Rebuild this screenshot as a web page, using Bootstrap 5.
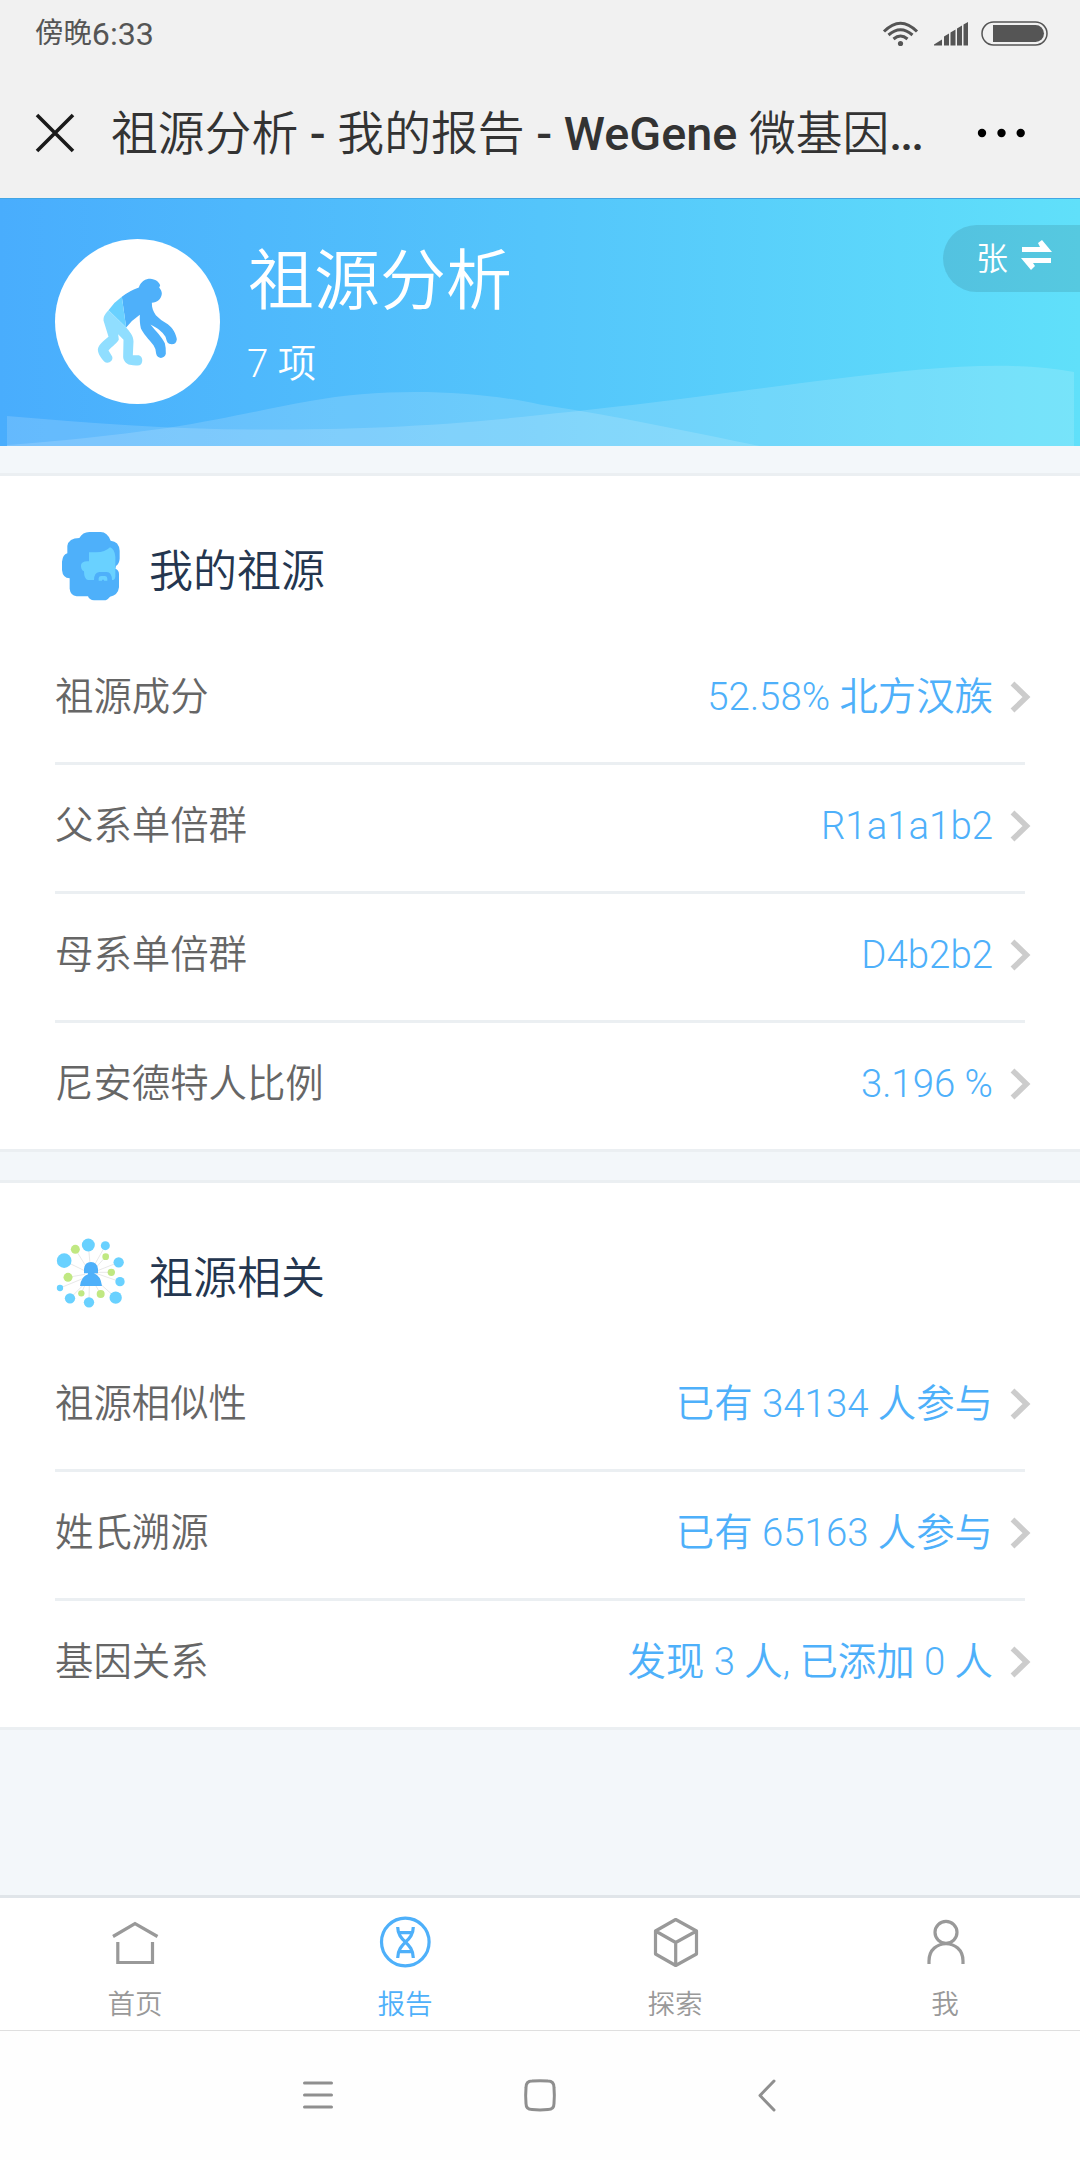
<!DOCTYPE html>
<html lang="zh-CN">
<head>
<meta charset="utf-8">
<meta name="viewport" content="width=device-width, initial-scale=1">
<title>祖源分析 - 我的报告 - WeGene 微基因</title>
<link href="https://cdn.jsdelivr.net/npm/bootstrap@5.3.0/dist/css/bootstrap.min.css" rel="stylesheet">
<style>
  body { font-family: Roboto, "Noto Sans CJK SC", sans-serif; font-weight: 350; background: #f3f7fa; line-height: 1.2; }
  .screen { width: 1080px; height: 2160px; background: #f3f7fa; }
  .chrome { background: #f1f1f1; height: 198px; color: #333; }
  .statusbar { height: 66px; padding: 2px 32px 0 35px; color: #555; }
  .statusbar svg { margin-top: -2px; }
  .clock-zh { font-size: 28.4px; font-weight: 400; }
  .clock-num { font-size: 32.2px; font-weight: 400; }
  .titlebar { height: 132px; padding: 2px 52px 0 35px; }
  .page-title { font-size: 46.8px; margin: 2px 0 0 36px; }
  .page-title b { font-weight: 500; }
  .page-title .dots { letter-spacing: -2px; }
  .hero { height: 248px; background: linear-gradient(90deg, #49adfd, #54c5fb 50%, #60e0fa); border-top: 1px solid #43a6e4; color: #fff; padding-left: 55px; }
  .hero-waves { left: 0; top: -1px; }
  .avatar { width: 165px; height: 165px; background: #fff; margin-top: 40px; }
  .hero-title { font-size: 66px; line-height: 80px; margin: 43px 0 0 28px; font-weight: 350; }
  .hero-count { font-size: 38.4px; line-height: 46px; margin: 19px 0 0 27px; }
  .switcher { height: 67px; width: 137px; top: 26px; right: 0; background: rgba(0,0,0,.1); border-radius: 34px 0 0 34px; font-size: 32px; padding: 1px 27px 0 33px; }
  .switcher svg { margin-top: -8px; }
  .panel { background: #fff; border-top: 3px solid #ebeff2; border-bottom: 3px solid #ebeff2; padding: 0 55px; margin-top: 27px; }
  .panel + .panel { margin-top: 28px; }
  .panel-head { height: 160px; padding-top: 54px; }
  .panel-name { font-size: 44px; color: #24364f; font-weight: 350; padding: 16px 0 0 22px; margin: 0; }
  .item { height: 129px; font-size: 38.4px; color: #666; border-bottom: 3px solid #ebeff2; padding: 0 0 3px 0; }
  .item:last-child { border-bottom: 0; height: 126px; }
  .item-value { color: #4eb0fa; margin-right: 17px; }
  .chev { margin: -1px -7px 0 0; }
  .tabs { height: 135px; background: #fff; border-top: 3px solid #e0e5e9; }
  .tabs a { color: #999; font-size: 27.6px; text-decoration: none; width: 270px; }
  .tabs a.active { color: #4eb0fa; }
  .tabs svg { margin-top: 15px; }
  .tabs span { margin-top: 15px; line-height: 34px; }
  .sysnav { height: 130px; background: #fefefe; border-top: 1px solid #dfdfdf; gap: 186px; padding-bottom: 2px; }
</style>
</head>
<body>
<div class="screen d-flex flex-column overflow-hidden">
  <header class="chrome">
    <div class="statusbar d-flex align-items-center">
      <div class="d-flex align-items-center me-auto"><span class="clock-zh">傍晚</span><span class="clock-num">6:33</span></div>
      <svg width="166" height="28" viewBox="882 18 166 28">
        <g fill="none" stroke="#555" stroke-width="3">
          <path d="M884 30.500Q900.500 14 917 30.500"/><path d="M888.500 34Q900.500 23.500 912.500 34"/><path d="M893.500 38Q900.500 32 907.500 38"/>
        </g>
        <circle cx="900.500" cy="42.500" r="2.600" fill="#555"/>
        <path fill="#555" d="M934 44.500v-1l8-5v6zM944 44.500v-9l5-3v12zM950.500 44.500v-13l5-3v16zM957 44.500v-17l5-3v20zM963.500 44.500v-21l4.500-2.500v23.500z"/>
        <rect x="982" y="21" width="65" height="23" rx="11.500" fill="none" stroke="#555" stroke-width="1.500"/>
        <path fill="#555" d="M993 24h42.500a8.500 8.500 0 0 1 0 17H993z"/>
      </svg>
    </div>
    <div class="titlebar d-flex align-items-center">
      <svg width="40" height="40" viewBox="0 0 40 40"><path d="M2 2l36 36M38 2L2 38" stroke="#1a1a1a" stroke-width="3.600"/></svg>
      <div class="page-title text-nowrap me-auto">祖源分析<b> - </b>我的报告<b> - WeGene </b>微基因<b class="dots">...</b></div>
      <svg width="54" height="12" viewBox="974 127 54 12"><circle cx="982" cy="133" r="4.200"/><circle cx="1001.500" cy="133" r="4.200"/><circle cx="1020.700" cy="133" r="4.200"/></svg>
    </div>
  </header>

  <section class="hero position-relative d-flex">
    <svg class="hero-waves position-absolute" width="1080" height="248" viewBox="0 0 1080 248" fill="#fff" fill-opacity=".15">
      <path d="M7 218C90 225 170 231.500 260 231.500C360 231.500 440 228 540 217C660 205 760 190 834 181C930 169 1010 162 1074 174V248H7z"/>
      <path d="M7 247C60 243 110 238 167 230C225 221 265 211 310 203C380 190 470 191 540 206.500L578 212.500C640 223 700 236 760 248H7z"/>
    </svg>
    <div class="avatar rounded-circle d-flex align-items-center justify-content-center position-relative">
      <svg width="120" height="120" viewBox="-5.500 4.500 360 360">
        <path fill="#4eb0fa" d="M126 109Q150 90 177 81C183 62 198 55 211 55C226 56 238 64 241 75L238 81C244 88 246 93 246 100C244 117 232 126 216 127C216 143 220 153 228 164Q244 181 264 191C278 201 289 220 291 236C290 250 279 254 268 250C261 247 260 238 257 229C248 213 230 201 212 192C228 212 247 230 255 248Q259 263 258 280C255 296 232 297 229 280Q228 263 221 254C207 236 190 219 183 203Q179 188 180 163Q155 180 139 201z"/>
        <path fill="#69d1ff" d="M126 109Q103 125 86 149L139 201z"/>
        <path fill="#90deff" d="M86 149Q69 166 71 180L86 229C71 242 57 252 54 266C54 281 65 293 73 303C84 313 102 301 97 288L86 270C98 256 113 248 117 237L115 221L131 238L130 289C130 301 140 311 150 313Q166 316 179 314C191 309 190 287 177 284H159L161 243C161 224 149 214 139 201z"/>
      </svg>
    </div>
    <div class="position-relative">
      <h1 class="hero-title">祖源分析</h1>
      <p class="hero-count">7 项</p>
    </div>
    <div class="switcher position-absolute d-flex align-items-center justify-content-between">
      <span>张</span>
      <svg width="32" height="30" viewBox="0 0 32 30" fill="#fff"><path d="M1 7h18l-2-4 4-3 10 12H1zM30 23H12l2 3-4 4L0 18h30z"/></svg>
    </div>
  </section>

  <main class="flex-grow-1">
    <section class="panel">
      <div class="panel-head d-flex align-items-start">
        <svg class="flex-shrink-0" width="72" height="72" viewBox="45 60 216 216">
          <path fill="#4eb0fa" d="M118 84Q128 66 148 66H182Q202 66 212 92Q237 94 239 122V146Q238 160 228 168L226 176Q237 180 237 192V232Q234 256 210 260Q202 271 192 271H162Q148 270 144 259H110Q91 256 89 236V205Q68 204 66 180V155Q68 134 82 130V108Q86 84 118 84z"/>
          <path fill="#69d1ff" d="M147 127H168Q196 127 210 112Q224 118 226 140V200Q225 210 216 210Q215 186 200 186H178Q162 188 162 210H144Q132 208 132 184Q122 180 123 165Q126 152 147 154z"/>
          <path fill="#69d1ff" d="M176 212V204Q177 198 184 198H195Q202 199 202 206V212H192V209H186V212z"/>
        </svg>
        <h2 class="panel-name">我的祖源</h2>
      </div>
      <div class="item d-flex align-items-center"><span class="me-auto">祖源成分</span><span class="item-value">52.58% 北方汉族</span><svg class="chev" width="22" height="32" viewBox="0 0 22 32"><path d="M2.500 2.500L16.500 16L2.500 29.500" fill="none" stroke="#ccc" stroke-width="5.500"/></svg></div>
      <div class="item d-flex align-items-center"><span class="me-auto">父系单倍群</span><span class="item-value">R1a1a1b2</span><svg class="chev" width="22" height="32" viewBox="0 0 22 32"><path d="M2.500 2.500L16.500 16L2.500 29.500" fill="none" stroke="#ccc" stroke-width="5.500"/></svg></div>
      <div class="item d-flex align-items-center"><span class="me-auto">母系单倍群</span><span class="item-value">D4b2b2</span><svg class="chev" width="22" height="32" viewBox="0 0 22 32"><path d="M2.500 2.500L16.500 16L2.500 29.500" fill="none" stroke="#ccc" stroke-width="5.500"/></svg></div>
      <div class="item d-flex align-items-center"><span class="me-auto">尼安德特人比例</span><span class="item-value">3.196 %</span><svg class="chev" width="22" height="32" viewBox="0 0 22 32"><path d="M2.500 2.500L16.500 16L2.500 29.500" fill="none" stroke="#ccc" stroke-width="5.500"/></svg></div>
    </section>

    <section class="panel">
      <div class="panel-head d-flex align-items-start">
        <svg class="flex-shrink-0" width="72" height="72" viewBox="45 80 216 216">
          <path stroke="#ddd" stroke-width="2" d="M152 190L72 151M152 190L106 117M150 160L145 104M160 170L196 106M165 175L197 139M165 184L236 156M165 186H214M165 188L240 214M180 220L227 262M165 222L182 251M148 222L147 276M135 224L124 248M130 224L90 264M140 200L60 233M135 192L84 201"/>
          <g fill="#69d1ff"><circle cx="72.500" cy="151" r="22"/><circle cx="145" cy="104" r="19.500"/><circle cx="196" cy="106" r="13.500"/><circle cx="236" cy="156" r="15.500"/><circle cx="240" cy="214" r="14"/><circle cx="227" cy="262" r="18.500"/><circle cx="147" cy="276" r="15.500"/><circle cx="90" cy="264" r="15.500"/><circle cx="60" cy="233" r="9.500"/></g>
          <g fill="#c0e882"><circle cx="106" cy="117" r="13.500"/><circle cx="197" cy="139" r="10"/><circle cx="214" cy="186" r="11"/><circle cx="84" cy="201" r="13.500"/><circle cx="124" cy="249" r="9.500"/><circle cx="182" cy="251" r="12"/></g>
          <path fill="#4eb0fa" d="M132 189V176Q134 155 153 155Q172 156 174 176V189H162Q182 196 186 227H120Q124 198 144 192V189z"/>
        </svg>
        <h2 class="panel-name">祖源相关</h2>
      </div>
      <div class="item d-flex align-items-center"><span class="me-auto">祖源相似性</span><span class="item-value">已有 34134 人参与</span><svg class="chev" width="22" height="32" viewBox="0 0 22 32"><path d="M2.500 2.500L16.500 16L2.500 29.500" fill="none" stroke="#ccc" stroke-width="5.500"/></svg></div>
      <div class="item d-flex align-items-center"><span class="me-auto">姓氏溯源</span><span class="item-value">已有 65163 人参与</span><svg class="chev" width="22" height="32" viewBox="0 0 22 32"><path d="M2.500 2.500L16.500 16L2.500 29.500" fill="none" stroke="#ccc" stroke-width="5.500"/></svg></div>
      <div class="item d-flex align-items-center"><span class="me-auto">基因关系</span><span class="item-value">发现 3 人, 已添加 0 人</span><svg class="chev" width="22" height="32" viewBox="0 0 22 32"><path d="M2.500 2.500L16.500 16L2.500 29.500" fill="none" stroke="#ccc" stroke-width="5.500"/></svg></div>
    </section>
  </main>

  <nav class="tabs d-flex flex-shrink-0">
    <a href="#" class="d-flex flex-column align-items-center">
      <svg width="60" height="60" viewBox="105 1913 60 60" fill="none" stroke="#999" stroke-width="3.200"><path d="M113 1936.500L135 1923.500L157.500 1936.500M117.800 1942V1962.500H152.500V1942"/></svg><span>首页</span></a>
    <a href="#" class="active d-flex flex-column align-items-center">
      <svg width="60" height="60" viewBox="375 1913 60 60" fill="none" stroke="#4eb0fa" stroke-width="3.200"><circle cx="405.300" cy="1942" r="23.800"/><path d="M397.700 1927C397.700 1942 413.300 1942 413.300 1958M413.300 1927C413.300 1942 397.700 1942 397.700 1958M399.500 1932.700H411.500M399.500 1951.700H411.500"/></svg><span>报告</span></a>
    <a href="#" class="d-flex flex-column align-items-center">
      <svg width="60" height="60" viewBox="645 1913 60 60" fill="none" stroke="#999" stroke-width="3.200" stroke-linejoin="round"><path d="M675.700 1919.500L696.500 1931V1954L675.700 1965.500L655.500 1954V1931zM655.500 1931L675.700 1942.500L696.500 1931M675.700 1942.500V1965.500"/></svg><span>探索</span></a>
    <a href="#" class="d-flex flex-column align-items-center">
      <svg width="60" height="60" viewBox="915 1913 60 60" fill="none" stroke="#999" stroke-width="3.200"><circle cx="946" cy="1932.300" r="11"/><path d="M929 1964V1961C929 1938 963 1938 963 1961V1964"/></svg><span>我</span></a>
  </nav>
  <footer class="sysnav d-flex flex-shrink-0 align-items-center justify-content-center">
    <svg width="36" height="36" viewBox="300 2076.500 36 36" stroke="#8f8f8f" stroke-width="3" stroke-linecap="round"><path d="M304.500 2082.500H331.500M304.500 2094.500H331.500M304.500 2106.500H331.500"/></svg>
    <svg width="36" height="36" viewBox="522 2076.500 36 36" fill="none" stroke="#8f8f8f" stroke-width="3"><path d="M532 2080.500Q540 2079.800 548 2080.500Q554 2080.500 554 2087Q554.700 2095 554 2103Q554 2109 548 2109Q540 2109.800 532 2109Q526 2109 526 2103Q525.300 2095 526 2087Q526 2080.500 532 2080.500z"/></svg>
    <svg width="36" height="36" viewBox="744 2076.500 36 36" fill="none" stroke="#8f8f8f" stroke-width="3" stroke-linecap="round" stroke-linejoin="round"><path d="M774 2080.500L760 2095L774 2109.500"/></svg>
  </footer>
</div>
<script src="https://cdn.jsdelivr.net/npm/bootstrap@5.3.0/dist/js/bootstrap.bundle.min.js"></script>
</body>
</html>
